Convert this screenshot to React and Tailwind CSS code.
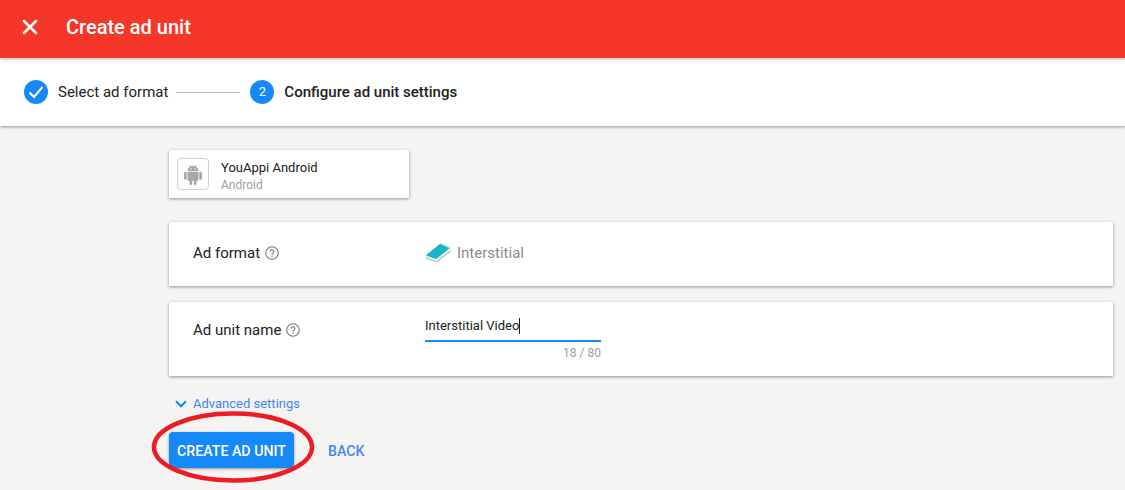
import React from "react";
import { X } from "lucide-react";

function HelpIcon() {
  return (
    <svg width="14" height="14" viewBox="0 0 14 14" fill="none" className="ml-[5px] shrink-0">
      <circle cx="7" cy="7" r="6.300" stroke="#757575" strokeWidth="1.1" />
      <path d="M5.2 5.6a1.8 1.8 0 1 1 2.9 1.4c-.7.5-1.1.8-1.1 1.6" stroke="#757575" strokeWidth="1.1" />
      <circle cx="7" cy="10.3" r=".7" fill="#757575" />
    </svg>
  );
}

function AndroidIcon() {
  return (
    <svg width="18" height="21" viewBox="0 0 18 21" fill="#a8a6a2">
      <path d="M3.500 7a5.500 5 0 0 1 11 0z" />
      <path d="M5.500 1.200 6.800 3M12.500 1.200 11.200 3" stroke="#a8a6a2" strokeWidth=".9" />
      <rect x="3.500" y="7.800" width="11" height="9" rx="1" />
      <rect x="0" y="7.800" width="2.700" height="8" rx="1.350" />
      <rect x="15.300" y="7.800" width="2.700" height="8" rx="1.350" />
      <rect x="5.500" y="15" width="2.700" height="6" rx="1.350" />
      <rect x="9.800" y="15" width="2.700" height="6" rx="1.350" />
      <circle cx="7" cy="4.800" r=".7" fill="white" />
      <circle cx="11" cy="4.800" r=".7" fill="white" />
    </svg>
  );
}

function BookIcon() {
  return (
    <svg width="26" height="20" viewBox="0 0 26 20" className="shrink-0">
      <path d="M0.500 12.500 11 17.500l14.500-11V9L11.500 19.500 1 15.500z" fill="#aebcbc" />
      <path d="M1 12.800 11 16.800 25 6.500v1.500L11.200 18.200 1 14.300z" fill="#f0f4f4" />
      <path d="M0.800 12.200 15.500 0.500l9.500 4.500L11 16.300z" fill="#17b4c7" />
      <path d="M15.500 0.500l9.500 4.500-.8.600L15.200 1.400z" fill="#6fd3df" />
    </svg>
  );
}

export default function App() {
  return (
    <div className="relative h-[490px] w-[1125px] overflow-hidden bg-[#f5f4f3] font-['Roboto',sans-serif]">
      <header className="relative z-20 flex h-[58px] items-center bg-[#f5372a] pb-[4px] pl-[18px] text-white shadow-[0_1px_3px_rgba(0,0,0,0.3)]">
        <X size={24} strokeWidth={2.5} />
        <h1 className="ml-6 text-[20px] font-medium">Create ad unit</h1>
      </header>

      <nav className="relative z-10 flex h-[68px] items-center bg-white pl-6 text-[15px] text-[#212121] shadow-[0_1px_3px_rgba(0,0,0,0.4)]">
        <span className="flex h-6 w-6 items-center justify-center rounded-full bg-[#1589f7]">
          <svg width="16" height="14" viewBox="0 0 16 14" fill="none">
            <path d="M1.500 7.500 6 12 14.500 2" stroke="white" strokeWidth="2" />
          </svg>
        </span>
        <span className="ml-[10px]">Select ad format</span>
        <span className="ml-2 h-px w-16 bg-[#bdbdbd]" />
        <span className="ml-[10px] flex h-6 w-6 items-center justify-center rounded-full bg-[#1589f7] text-[13px] text-white">
          2
        </span>
        <span className="ml-[10px] font-medium">Configure ad unit settings</span>
      </nav>

      <main className="pl-[169px] pr-3 pt-6">
        <div className="flex h-12 w-60 items-center bg-white pl-2 shadow-[0_1px_3px_rgba(0,0,0,0.4)]">
          <div className="flex h-8 w-8 items-center justify-center rounded-sm border border-[#d0d0d0]">
            <AndroidIcon />
          </div>
          <div className="ml-3 pt-[5px]">
            <div className="text-[13px] leading-[17px] text-[#212121]">YouAppi Android</div>
            <div className="mt-px text-[12px] leading-[17px] text-[#9e9e9e]">Android</div>
          </div>
        </div>

        <section className="mt-6 flex h-16 items-center bg-white pb-[2px] pl-6 shadow-[0_1px_3px_rgba(0,0,0,0.4)]">
          <div className="flex w-[232px] items-center text-[15px] text-[#212121]">
            Ad format
            <HelpIcon />
          </div>
          <BookIcon />
          <span className="ml-[6px] text-[15px] text-[#8a8a8a]">Interstitial</span>
        </section>

        <section className="mt-4 flex h-[74px] bg-white pl-6 pt-[18px] shadow-[0_1px_3px_rgba(0,0,0,0.4)]">
          <div className="flex h-[20px] w-[232px] items-center text-[15px] text-[#212121]">
            Ad unit name
            <HelpIcon />
          </div>
          <div className="-mt-[5px] w-44">
            <div className="flex h-[21px] items-center text-[13px] text-[#212121]">
              Interstitial Video
              <span className="h-4 w-px bg-[#212121]" />
            </div>
            <div className="mt-[4px] h-[2px] bg-[#1589f7]" />
            <div className="mt-[4px] text-right text-[12px] leading-[14px] text-[#9e9e9e]">18 / 80</div>
          </div>
        </section>

        <button type="button" className="mt-[19px] flex h-[17px] items-center text-[13px] text-[#4285f4]">
          <svg width="12" height="8" viewBox="0 0 12 8" fill="none" className="ml-[6px] mr-[6px]">
            <path d="M1 1.300 6 6.300l5-5" stroke="#1589f7" strokeWidth="2" />
          </svg>
          <span>Advanced settings</span>
        </button>

        <div className="mt-[20px] flex items-center">
          <button
            type="button"
            className="h-9 w-[125px] rounded-sm bg-[#1589f7] pt-[3px] text-[14.200px] font-medium text-white shadow-[0_1px_3px_rgba(0,0,0,0.4)]"
          >
            CREATE AD UNIT
          </button>
          <button type="button" className="ml-[34px] pt-[3px] text-[14.200px] font-medium text-[#4285f4]">
            BACK
          </button>
        </div>
      </main>

      <svg width="166" height="74" viewBox="0 0 166 74" fill="none" className="absolute left-[150px] top-[410px]">
        <ellipse cx="83" cy="37" rx="79" ry="33.500" stroke="#ed1c24" strokeWidth="4.500" />
      </svg>
    </div>
  );
}
